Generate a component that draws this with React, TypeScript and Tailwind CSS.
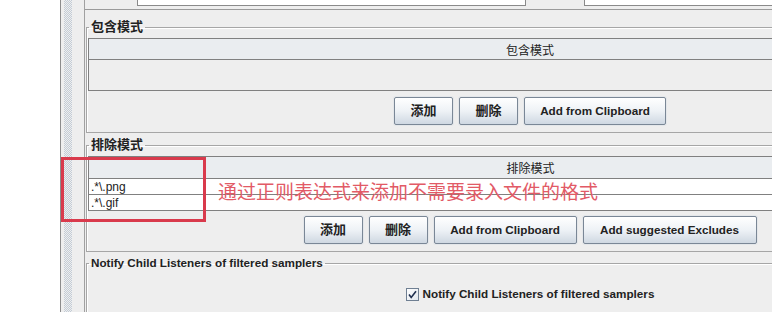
import React from 'react';

const FONT = "font-['Liberation_Sans','Noto_Sans_CJK_SC',sans-serif]";

function Btn({ label, w, size }: { label: string; w: string; size: string }) {
  return (
    <button
      className={`${w} ${size} h-[28px] shrink-0 rounded-[2px] border border-[#7a8796] bg-linear-to-b from-[#ffffff] via-[#eef2f6] to-[#cfd8e2] font-bold text-[#222] shadow-[0_0_0_1px_#e4e7ea]`}
    >
      {label}
    </button>
  );
}

function Group({ title, className, children }: { title: string; className: string; children?: React.ReactNode }) {
  return (
    <fieldset className={`ml-[1px] w-[888px] border border-[#a6a6a6] shadow-[inset_1px_1px_0_#ffffff] ${className}`}>
      <legend className="ml-[2px] px-[2px] text-[13px] leading-[16px] font-bold text-[#222]">{title}</legend>
      {children}
    </fieldset>
  );
}

export default function App() {
  return (
    <div className={`relative flex h-[312px] w-[772px] overflow-hidden bg-[#eeeeee] ${FONT}`}>
      {/* tree area + splitter */}
      <div className="w-[60px] shrink-0 bg-white" />
      <div className="w-[1px] shrink-0 bg-[#8c8c8c]" />
      <div className="w-[3px] shrink-0" />
      <div className="w-[8px] shrink-0 bg-[conic-gradient(#c3ccd6_25%,transparent_0_50%,#c3ccd6_0_75%,transparent_0)] bg-[length:2px_2px]" />

      <div className="flex-1 pl-[12px]">
        <div className="h-full border-l border-[#a0a0a0]">
          {/* bottom of upper panel */}
          <div className="flex h-[10px] w-[900px] border-b border-[#9a9a9a]">
            <div className="ml-[52px] h-[6px] w-[389px] border-x border-b border-[#8a8a8a] bg-white" />
            <div className="ml-[58px] h-[6px] w-[300px] border-x border-b border-[#8a8a8a] bg-white" />
          </div>

          <Group title="包含模式" className="mt-[9px] pb-[7px]">
            <div className="mx-[1px] mt-[3px] border border-[#808080]">
              <div className="flex h-[21px] items-center justify-center border-b border-[#808080] bg-[#eaedf0] pt-[3px] text-[12px] text-[#222]">
                包含模式
              </div>
              <div className="h-[30px]" />
            </div>
            <div className="mt-[6px] flex justify-center gap-[6px]">
              <Btn label="添加" w="w-[59px]" size="text-[13px]" />
              <Btn label="删除" w="w-[59px]" size="text-[13px]" />
              <Btn label="Add from Clipboard" w="w-[142px]" size="text-[11.7px]" />
            </div>
          </Group>

          <Group title="排除模式" className="mt-[4px] pb-[7px]">
            <div className="mx-[1px] mt-[3px] border-l border-t border-[#808080]">
              <div className="flex h-[22px] items-center justify-center border-b border-[#808080] bg-[#eaedf0] pt-[3px] text-[12px] text-[#222]">
                排除模式
              </div>
              <div className="flex h-[16px] items-center border-b border-[#808080] bg-white pl-[2px] text-[12px] text-[#222]">
                .*\.png
              </div>
              <div className="flex h-[16px] items-center border-b border-[#808080] bg-white pl-[2px] text-[12px] text-[#222]">
                .*\.gif
              </div>
            </div>
            <div className="mt-[5px] flex justify-center gap-[6px]">
              <Btn label="添加" w="w-[59px]" size="text-[13px]" />
              <Btn label="删除" w="w-[59px]" size="text-[13px]" />
              <Btn label="Add from Clipboard" w="w-[143px]" size="text-[11.7px]" />
              <Btn label="Add suggested Excludes" w="w-[174px]" size="text-[11.7px]" />
            </div>
          </Group>

          <Group title="Notify Child Listeners of filtered samplers" className="mt-[3px] h-[80px] [&>legend]:text-[11.7px]">
            <div className="mt-[16px] flex items-center justify-center gap-[4px]">
              <svg width="13" height="13" viewBox="0 0 13 13">
                <defs>
                  <linearGradient id="cb" x1="0" y1="0" x2="1" y2="1">
                    <stop offset="0" stopColor="#ffffff" />
                    <stop offset="1" stopColor="#dfe5ec" />
                  </linearGradient>
                </defs>
                <rect x="0.5" y="0.5" width="12" height="12" fill="url(#cb)" stroke="#6f7f92" />
                <path d="M3 6.5 L5.2 9.5 L10 3.2" fill="none" stroke="#1f2f4f" strokeWidth="1.6" />
              </svg>
              <span className="text-[11.7px] font-bold leading-[14px] text-[#222]">Notify Child Listeners of filtered samplers</span>
            </div>
          </Group>
        </div>
      </div>

      {/* red annotation */}
      <div className="absolute left-[61px] top-[157px] h-[65px] w-[145px] border-[3px] border-[#d93a4c]" />
      <div className="absolute left-[218px] top-[180px] text-[19px] leading-[22px] text-[#e25a66] font-['Noto_Sans_CJK_SC',sans-serif]">
        通过正则表达式来添加不需要录入文件的格式
      </div>
    </div>
  );
}
